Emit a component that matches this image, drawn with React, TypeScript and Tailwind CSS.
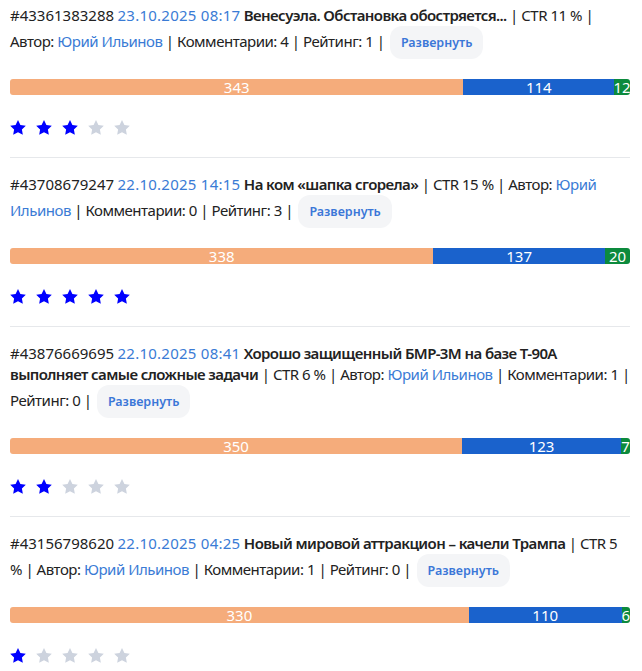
import React from "react";

type Post = {
  id: string;
  date: string;
  title: string;
  ctr: number;
  comments: number;
  rating: number;
  bars: [number, number, number];
  stars: number;
};

const posts: Post[] = [
  {
    id: "#43361383288",
    date: "23.10.2025 08:17",
    title: "Венесуэла. Обстановка обостряется...",
    ctr: 11,
    comments: 4,
    rating: 1,
    bars: [343, 114, 12],
    stars: 3,
  },
  {
    id: "#43708679247",
    date: "22.10.2025 14:15",
    title: "На ком «шапка сгорела»",
    ctr: 15,
    comments: 0,
    rating: 3,
    bars: [338, 137, 20],
    stars: 5,
  },
  {
    id: "#43876669695",
    date: "22.10.2025 08:41",
    title: "Хорошо защищенный БМР-3М на базе Т-90А выполняет самые сложные задачи",
    ctr: 6,
    comments: 1,
    rating: 0,
    bars: [350, 123, 7],
    stars: 2,
  },
  {
    id: "#43156798620",
    date: "22.10.2025 04:25",
    title: "Новый мировой аттракцион – качели Трампа",
    ctr: 5,
    comments: 1,
    rating: 0,
    bars: [330, 110, 6],
    stars: 1,
  },
];

const Star = ({ on }: { on: boolean }) => (
  <svg width="16" height="15" viewBox="2 2 20 19.2" className={on ? "fill-[#0000ff]" : "fill-[#cdd3de]"}>
    <polygon points="12,2 15.09,8.26 22,9.27 17,14.14 18.18,21.02 12,17.77 5.82,21.02 7,14.14 2,9.27 8.91,8.26" />
  </svg>
);

const Bar = ({ values }: { values: [number, number, number] }) => {
  const total = values[0] + values[1] + values[2];
  const colors = ["bg-[#f5ac7b]", "bg-[#1a62cc]", "bg-[#0c8a3d]"];
  return (
    <div className="mt-5 flex h-4 w-full overflow-hidden rounded-[3px]">
      {values.map((v, i) => (
        <div
          key={i}
          className={`${colors[i]} flex items-center justify-center text-[15px] leading-4 tracking-normal text-white`}
          style={{ width: `${(v / total) * 100}%` }}
        >
          {v}
        </div>
      ))}
    </div>
  );
};

export default function App() {
  return (
    <div className="min-h-screen bg-white pl-[10px] pr-[12px] font-['Noto_Sans',sans-serif] text-[15px] leading-[21px] tracking-[-0.48px] text-[#222]">
      {posts.map((p, idx) => (
        <div
          key={p.id}
          className={`border-b border-[#e6e8eb] pb-[22px] ${idx === 0 ? "pt-[5px]" : "pt-4"}`}
        >
          <div>
            <span className="tracking-normal">{p.id}</span>{" "}
            <span className="tracking-[0.25px] text-[#3a7bd5]">{p.date}</span>{" "}
            <b className="font-semibold tracking-[-0.6px]">{p.title}</b> | CTR {p.ctr} % | Автор:{" "}
            <span className="text-[#3a7bd5]">Юрий Ильинов</span> | Комментарии: {p.comments} |
            Рейтинг: {p.rating} |{" "}
            <button className="ml-0.5 inline-block rounded-xl bg-[#f4f5f7] px-[11px] py-2 text-[12.5px] font-semibold leading-[17px] tracking-normal text-[#3b77d8]">
              Развернуть
            </button>
          </div>
          <Bar values={p.bars} />
          <div className="mt-[25px] flex gap-[10px]">
            {[0, 1, 2, 3, 4].map((i) => (
              <Star key={i} on={i < p.stars} />
            ))}
          </div>
        </div>
      ))}
    </div>
  );
}
